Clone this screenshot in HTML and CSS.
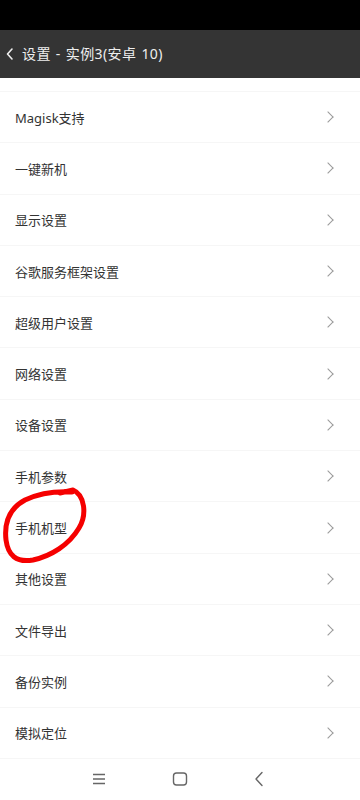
FILE: index.html
```html
<!DOCTYPE html>
<html lang="zh-CN">

<head>
  <meta charset="UTF-8">
  <meta name="viewport" content="width=device-width, initial-scale=1.0">
  <title>设置</title>
  <link rel="stylesheet" href="styles.css">
</head>

<body>
  <div class="page">
    <!-- 状态栏 -->
    <div class="status"></div>

    <!-- 标题栏 -->
    <div class="header">
      <svg class="back" width="10" height="14" viewBox="0 0 10 14">
        <path d="M7 2 L2.5 7 L7 12" fill="none" stroke="#eee" stroke-width="1.6" stroke-linecap="round" stroke-linejoin="round"/>
      </svg>
      <span class="title">设置 - 实例3(安卓 10)</span>
    </div>

    <!-- 设置列表 -->
    <div class="list">
      <div class="row"><span class="label">Magisk支持</span><i class="arrow"></i></div>
      <div class="row"><span class="label">一键新机</span><i class="arrow"></i></div>
      <div class="row"><span class="label">显示设置</span><i class="arrow"></i></div>
      <div class="row"><span class="label">谷歌服务框架设置</span><i class="arrow"></i></div>
      <div class="row"><span class="label">超级用户设置</span><i class="arrow"></i></div>
      <div class="row"><span class="label">网络设置</span><i class="arrow"></i></div>
      <div class="row"><span class="label">设备设置</span><i class="arrow"></i></div>
      <div class="row"><span class="label">手机参数</span><i class="arrow"></i></div>
      <div class="row"><span class="label">手机机型</span><i class="arrow"></i></div>
      <div class="row"><span class="label">其他设置</span><i class="arrow"></i></div>
      <div class="row"><span class="label">文件导出</span><i class="arrow"></i></div>
      <div class="row"><span class="label">备份实例</span><i class="arrow"></i></div>
      <div class="row"><span class="label">模拟定位</span><i class="arrow"></i></div>
    </div>

    <!-- 导航栏 -->
    <div class="navbar">
      <svg width="14" height="12" viewBox="0 0 14 12">
        <path d="M1 1.5 H13 M1 6 H13 M1 10.5 H13" stroke="#666" stroke-width="1.4"/>
      </svg>
      <svg width="16" height="14" viewBox="0 0 16 14">
        <rect x="1.5" y="1" width="13" height="12" rx="3" fill="none" stroke="#666" stroke-width="1.4"/>
      </svg>
      <svg width="10" height="16" viewBox="0 0 10 16">
        <path d="M8 1.5 L2 8 L8 14.5" fill="none" stroke="#666" stroke-width="1.4" stroke-linecap="round" stroke-linejoin="round"/>
      </svg>
    </div>

    <!-- 红色标注 -->
    <svg class="mark" width="360" height="800" viewBox="0 0 360 800">
      <path d="M60 493 L73 490 C85 495 87 515 79 528 C69 545 51 556 33 560 C16 563 8 555 6 540 C4 522 10 508 25 500 C40 493 55 491 72 492"
        fill="none" stroke="#f50000" stroke-width="5" stroke-linecap="round" stroke-linejoin="round"/>
    </svg>
  </div>
</body>

</html>
```

FILE: styles.css
```css
body {
  margin: 0;
  background-color: #fff;
  font-family: "Noto Sans", "Noto Sans CJK SC", sans-serif;
}

.page {
  position: relative;
  width: 360px;
  height: 800px;
  overflow: hidden;
}

.status {
  height: 30px;
  background-color: #000;
}

.header {
  height: 48px;
  background-color: #343434;
  display: flex;
  align-items: center;
  padding-left: 5px;
}

.header .back {
  margin-right: 7px;
}

.header .title {
  color: #eee;
  font-size: 14px;
  letter-spacing: 0.4px;
  word-spacing: 1px;
  line-height: 48px;
}

.list {
  padding-top: 13px;
}

.row {
  height: 50.3px;
  border-top: 1px solid #f6f6f6;
  display: flex;
  align-items: center;
  justify-content: space-between;
  padding: 0 28px 0 15px;
}

.row:last-child {
  border-bottom: 1px solid #f6f6f6;
}

.row .label {
  font-size: 13px;
  color: #333;
}

.row .arrow {
  width: 7px;
  height: 7px;
  border-top: 1.4px solid #9a9a9a;
  border-right: 1.4px solid #9a9a9a;
  transform: rotate(45deg);
}

.navbar {
  height: 41px;
  display: flex;
  align-items: center;
  justify-content: space-between;
  padding: 0 96px 0 92px;
}

.mark {
  position: absolute;
  left: 0;
  top: 0;
  pointer-events: none;
}
```
